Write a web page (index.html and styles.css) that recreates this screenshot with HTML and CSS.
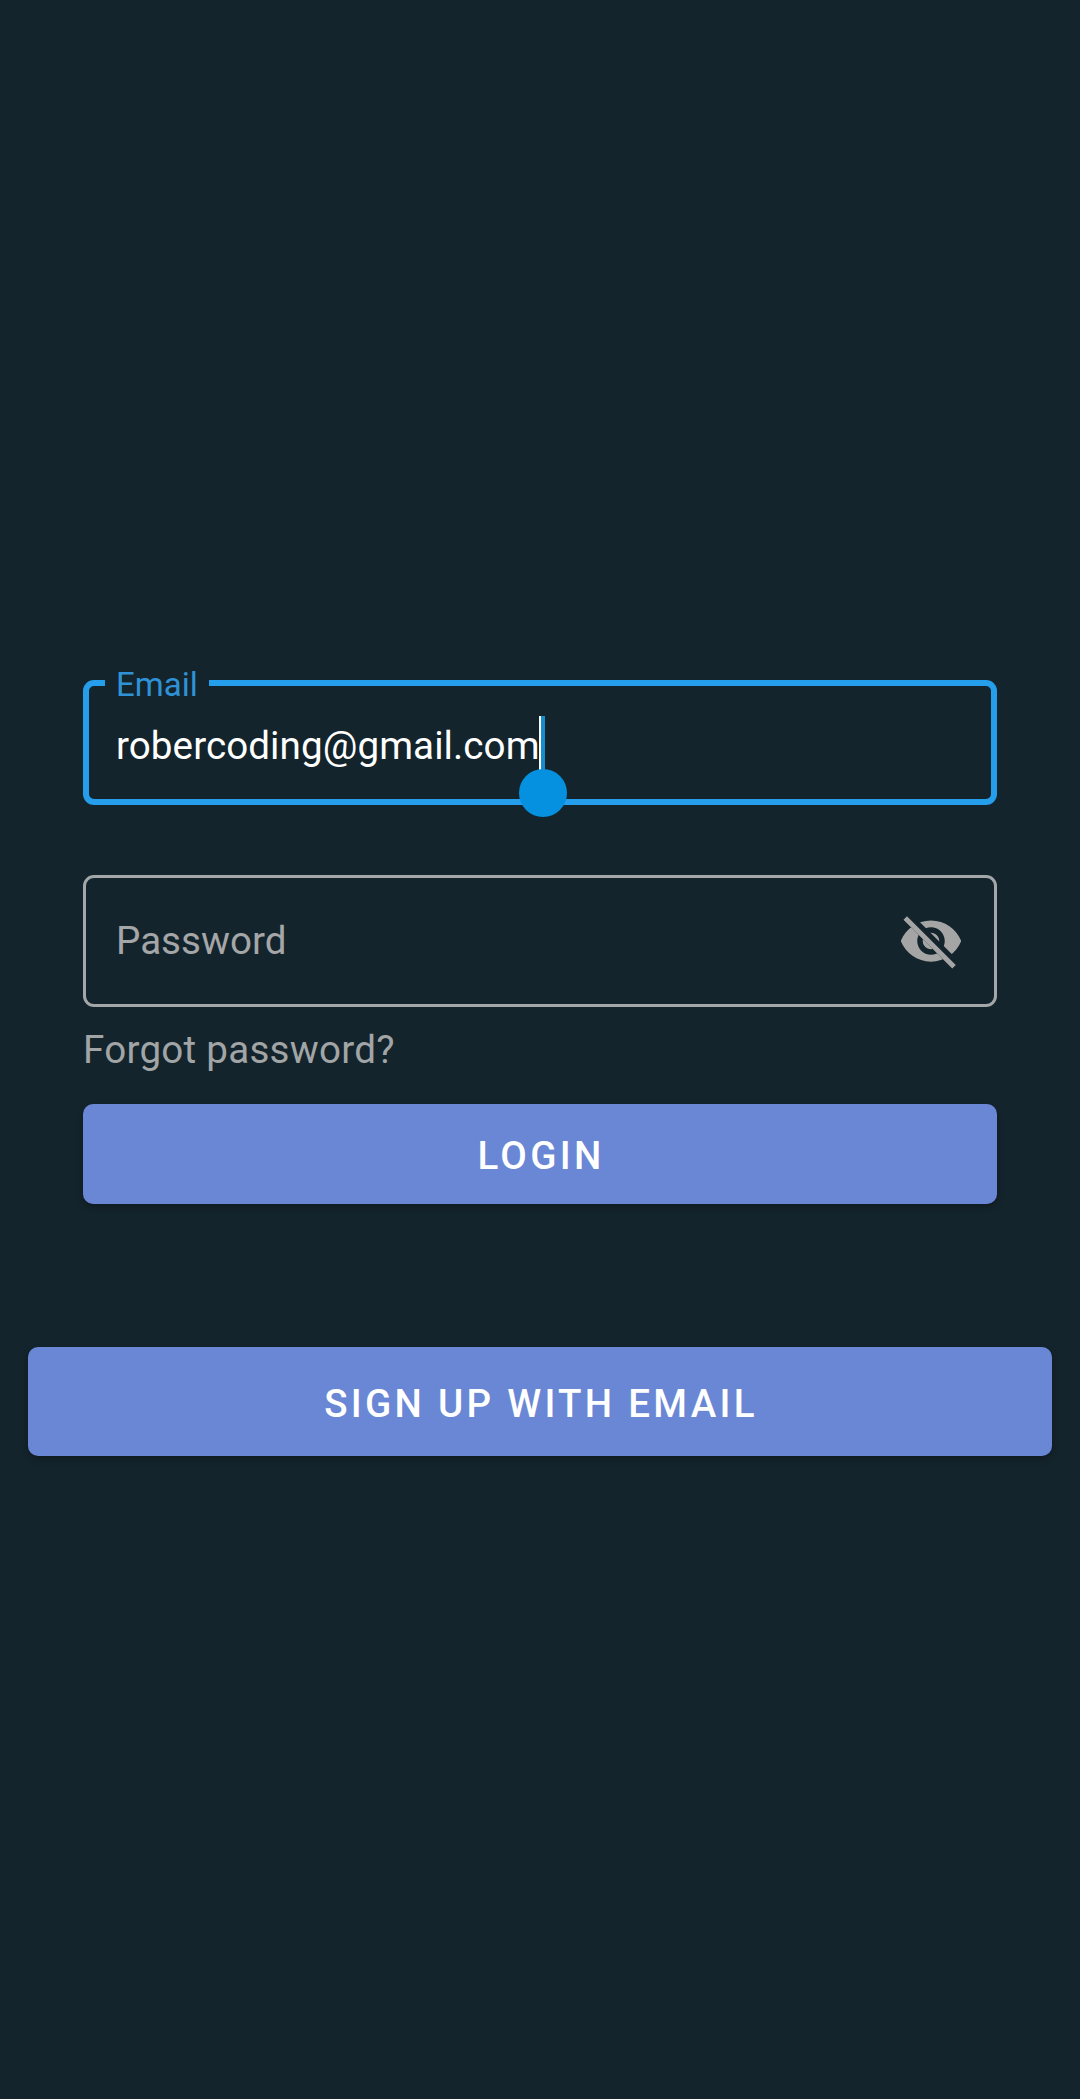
FILE: index.html
```html
<!DOCTYPE html>
<html lang="en">
<head>
<meta charset="utf-8">
<title>Login</title>
<link rel="stylesheet" href="styles.css">
</head>
<body>
<main class="screen">
  <form class="login">
    <div class="field field-active">
      <label class="field-label">Email</label>
      <span class="field-value">robercoding@gmail.com</span><span class="caret"><span class="caret-handle"></span></span>
    </div>
    <div class="field field-idle">
      <span class="field-placeholder">Password</span>
      <svg class="eye" viewBox="0 0 24 24" aria-hidden="true">
        <clipPath id="cut"><path d="M2 4.27 19.73 22 22.27 19.46 4.54 1.73V1H23V23H1V4.27Z"/></clipPath>
        <path clip-path="url(#cut)" fill="currentColor" d="M12 4.5C7 4.5 2.73 7.61 1 12c1.73 4.39 6 7.5 11 7.5s9.27-3.11 11-7.5c-1.73-4.39-6-7.5-11-7.5zM12 17c-2.76 0-5-2.24-5-5s2.24-5 5-5 5 2.24 5 5-2.24 5-5 5zM12 9c-1.66 0-3 1.34-3 3s1.34 3 3 3 3-1.34 3-3-1.34-3-3-3z"/>
        <path d="M3.27 4.27 19.74 20.74" fill="none" stroke="currentColor" stroke-width="1.8" stroke-linecap="square"/>
      </svg>
    </div>
    <a class="forgot">Forgot password?</a>
    <button class="button button-login" type="button">LOGIN</button>
  </form>
  <button class="button button-signup" type="button">SIGN UP WITH EMAIL</button>
</main>
</body>
</html>
```
FILE: styles.css
```css
* { box-sizing: border-box; }
body {
  margin: 0;
  background: #14242c;
  font-family: Roboto, sans-serif;
  font-size: 38.6px;
}
.screen {
  display: flex;
  flex-direction: column;
  min-height: 2099px;
  padding: 680px 28px 0;
}
.login {
  display: flex;
  flex-direction: column;
  margin: 0 55px;
}
.field {
  position: relative;
  display: flex;
  align-items: center;
  border-radius: 11px;
  white-space: nowrap;
}
.field-active {
  height: 125px;
  padding-left: 27px;
  border: 6px solid #259fec;
  color: #fff;
}
.field-label {
  position: absolute;
  left: 16px;
  top: -21px;
  width: 104px;
  padding-left: 11px;
  background: #14242c;
  color: #2f92d6;
  font-size: 33px;
  line-height: 40px;
}
.field-value { line-height: 46px; padding-top: 6px; letter-spacing: .08px; }
.caret {
  position: absolute;
  left: 450px;
  top: 30px;
  width: 6px;
  height: 60px;
  border-left: 2px solid #fff;
  background: #168dcc;
}
.caret-handle {
  position: absolute;
  left: -22px;
  top: 53px;
  width: 48px;
  height: 48px;
  border-radius: 50%;
  background: #0591df;
}
.field-idle {
  justify-content: space-between;
  height: 132px;
  margin-top: 70px;
  padding: 0 30px 0 30px;
  border: 3px solid #a3a7a9;
  color: #a4a6a8;
}
.field-placeholder { line-height: 46px; }
.eye { width: 66px; height: 66px; color: #a5a5a5; }
.forgot {
  margin-top: 20px;
  line-height: 46px;
  letter-spacing: .25px;
  color: #a2a5a6;
}
.button {
  border: 0;
  padding: 3px 0 0 2px;
  border-radius: 10px;
  background: #6a87d5;
  color: #fff;
  font: 500 38.5px Roboto, sans-serif;
  letter-spacing: 3.3px;
  box-shadow: 0 3px 6px rgba(0, 0, 0, .28);
}
.button-login { height: 100px; margin-top: 31px; }
.button-signup { height: 109px; margin-top: 143px; }
```
